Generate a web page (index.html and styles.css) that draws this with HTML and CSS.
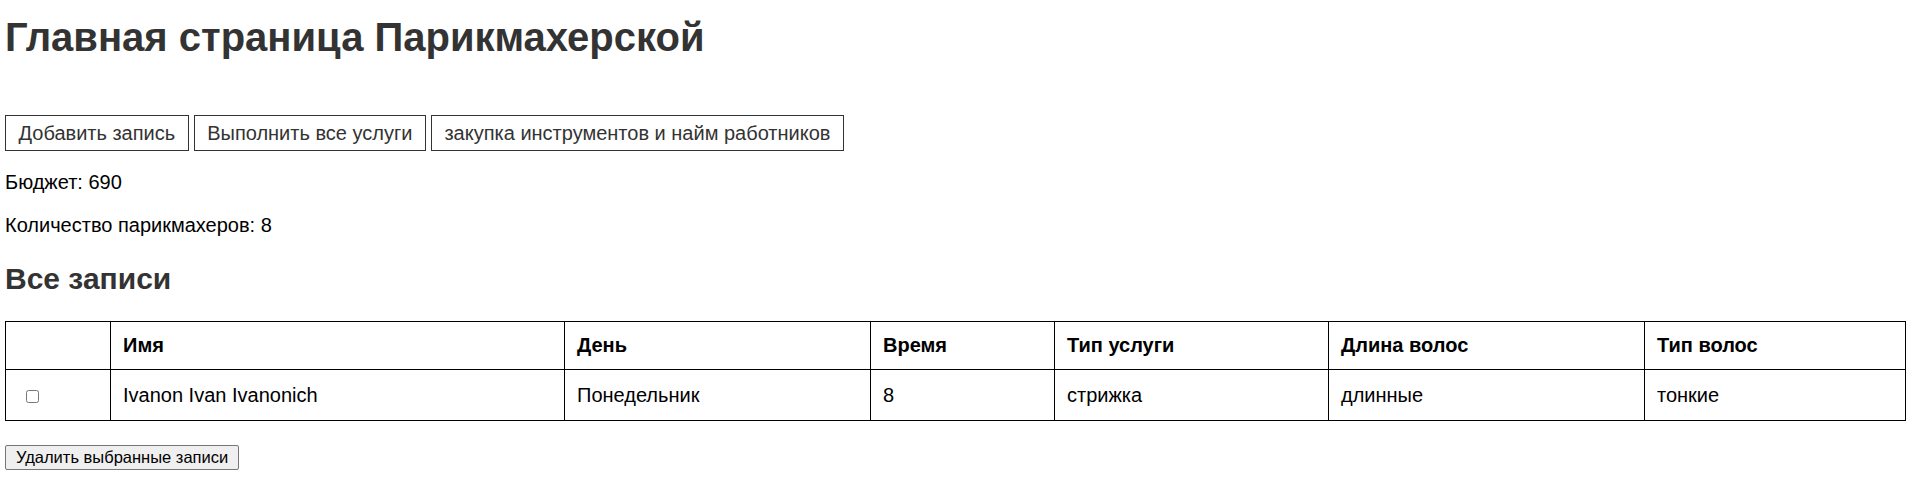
FILE: index.html
```html
<!DOCTYPE html>
<html lang="ru">
<head>
<meta charset="utf-8">
<title>Главная страница Парикмахерской</title>
<link rel="stylesheet" href="styles.css">
</head>
<body>
<h1 class="title">Главная страница Парикмахерской</h1>
<div class="actions">
  <button class="btn">Добавить запись</button>
  <button class="btn">Выполнить все услуги</button>
  <button class="btn">закупка инструментов и найм работников</button>
</div>
<p class="stat">Бюджет: 690</p>
<p class="stat">Количество парикмахеров: 8</p>
<h2 class="subtitle">Все записи</h2>
<table class="records">
  <colgroup>
    <col class="c-check">
    <col class="c-name">
    <col class="c-day">
    <col class="c-time">
    <col class="c-type">
    <col class="c-len">
    <col class="c-hair">
  </colgroup>
  <thead>
    <tr>
      <th></th>
      <th>Имя</th>
      <th>День</th>
      <th>Время</th>
      <th>Тип услуги</th>
      <th>Длина волос</th>
      <th>Тип волос</th>
    </tr>
  </thead>
  <tbody>
    <tr>
      <td><input type="checkbox" class="check"></td>
      <td>Ivanon Ivan Ivanonich</td>
      <td>Понедельник</td>
      <td>8</td>
      <td>стрижка</td>
      <td>длинные</td>
      <td>тонкие</td>
    </tr>
  </tbody>
</table>
<button class="delete">Удалить выбранные записи</button>
</body>
</html>
```
FILE: styles.css
```css
body {
  margin: 5px;
  font-family: "Liberation Sans", Arial, sans-serif;
  font-size: 20px;
  color: #000;
  background: #fff;
}

.title {
  font-size: 40px;
  line-height: 46px;
  font-weight: bold;
  color: #333;
  margin: 9px 0 55px;
}

.actions {
  display: flex;
  gap: 5px;
  margin-bottom: 2px;
}

.btn {
  font-family: "Liberation Sans", Arial, sans-serif;
  font-size: 20px;
  line-height: 23px;
  padding: 6px 12.5px 5px;
  border: 1px solid #333;
  background: #fff;
  color: #333;
  border-radius: 0;
}

.stat {
  margin: 20px 0;
  line-height: 23px;
}

.subtitle {
  font-size: 30px;
  line-height: 34px;
  font-weight: bold;
  color: #333;
  margin: 25px 0;
}

.records {
  border-collapse: collapse;
  width: 1900px;
  table-layout: fixed;
}

.c-check { width: 105px; }
.c-name { width: 454px; }
.c-day { width: 306px; }
.c-time { width: 184px; }
.c-type { width: 274px; }
.c-len { width: 316px; }
.c-hair { width: 261px; }

.records th,
.records td {
  border: 1px solid #000;
  padding: 12px;
  text-align: left;
  line-height: 23px;
  vertical-align: middle;
}

.records td {
  padding-top: 13.5px;
  padding-bottom: 13.5px;
}

.records th {
  font-weight: bold;
}

.check {
  margin: 0 0 0 8px;
  width: 13px;
  height: 13px;
  vertical-align: middle;
}

.delete {
  display: block;
  margin-top: 24px;
  font-family: "Liberation Sans", Arial, sans-serif;
  font-size: 16.5px;
  line-height: 19px;
  padding: 2px 10px;
  color: #000;
  background: #efefef;
  border: 1px solid #767676;
  border-radius: 2px;
}
```
